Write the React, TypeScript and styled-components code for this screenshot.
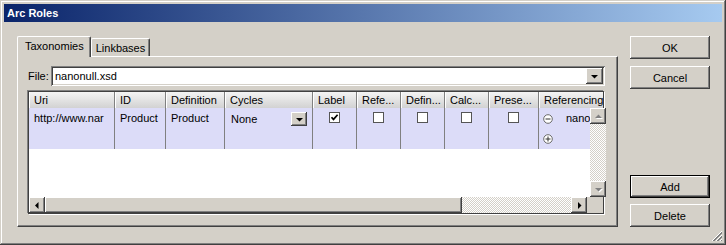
import React from "react";
import styled, { createGlobalStyle, css } from "styled-components";

const Global = createGlobalStyle`
  html, body { margin: 0; padding: 0; background: #d4d0c8; }
  body { font-family: "Liberation Sans", Arial, sans-serif; font-size: 11px; color: #000; }
  * { box-sizing: border-box; }
`;

const raised = css`
  box-shadow: inset -1px -1px #404040, inset 1px 1px #fff, inset -2px -2px #808080, inset 2px 2px #d4d0c8;
`;

const sunken = css`
  box-shadow: inset 1px 1px #808080, inset -1px -1px #fff, inset 2px 2px #404040, inset -2px -2px #d4d0c8;
`;

const dither = css`
  background: repeating-conic-gradient(#ffffff 0 25%, #d4d0c8 0 50%) 0 0 / 2px 2px;
`;

const Window = styled.div`
  position: relative;
  width: 726px;
  height: 245px;
  padding: 4px;
  display: flex;
  flex-direction: column;
  background: #d4d0c8;
  box-shadow: inset -1px -1px #404040, inset 1px 1px #d4d0c8, inset -2px -2px #808080, inset 2px 2px #fff;
`;

const TitleBar = styled.div`
  height: 18px;
  display: flex;
  align-items: center;
  padding-left: 3px;
  background: linear-gradient(to right, #0a246a, #a6caf0);
  color: #fff;
  font-weight: bold;
  font-size: 11px;
`;

const Body = styled.div`
  flex: 1;
  display: flex;
  gap: 12px;
  padding: 14px 12px 14px 13px;
`;

const LeftCol = styled.div`
  width: 601px;
  display: flex;
  flex-direction: column;
`;

const TabStrip = styled.div`
  height: 20px;
  display: flex;
  align-items: flex-end;
`;

const Tab = styled.div<{ $active?: boolean }>`
  display: flex;
  align-items: center;
  background: #d4d0c8;
  border-top: 1px solid #fff;
  border-left: 1px solid #fff;
  border-right: 1px solid #404040;
  box-shadow: inset -1px 0 #808080;
  border-radius: 2px 2px 0 0;
  white-space: nowrap;
  ${(p) =>
    p.$active
      ? css`
          height: 21px;
          padding: 0 6px 2px 7px;
          margin-bottom: -1px;
          position: relative;
          z-index: 1;
        `
      : css`
          height: 18px;
          padding: 0 4px 0 4px;
        `}
`;

const Panel = styled.div`
  height: 171px;
  display: flex;
  flex-direction: column;
  padding: 9px 12px 11px 9px;
  border-top: 1px solid #fff;
  border-left: 1px solid #fff;
  border-right: 1px solid #404040;
  border-bottom: 1px solid #404040;
  box-shadow: inset -1px -1px #808080;
`;

const FileRow = styled.div`
  height: 20px;
  display: flex;
  align-items: center;
  margin-bottom: 4px;
  padding-left: 1px;
`;

const FileLabel = styled.span`
  width: 23px;
`;

const ComboField = styled.div`
  flex: 1;
  height: 20px;
  display: flex;
  align-items: center;
  justify-content: space-between;
  padding: 2px 2px 2px 4px;
  background: #fff;
  ${sunken}
`;

const DropButton = styled.div<{ $w: number; $h: number }>`
  width: ${(p) => p.$w}px;
  height: ${(p) => p.$h}px;
  display: flex;
  align-items: center;
  justify-content: center;
  background: #d4d0c8;
  flex-shrink: 0;
  ${raised}
`;

const Grid = styled.div`
  margin: 1px;
  height: 123px;
  display: flex;
  flex-direction: column;
  border: 1px solid #404040;
  box-shadow: -1px -1px 0 #808080, 1px 1px 0 #fff;
  background: #fff;
`;

const HeaderRow = styled.div`
  height: 16px;
  display: flex;
`;

const HeaderCell = styled.div<{ $w?: number }>`
  ${(p) => (p.$w ? css`width: ${p.$w}px;` : css`flex: 1;`)}
  flex-shrink: 0;
  height: 16px;
  line-height: 16px;
  padding-left: 5px;
  overflow: hidden;
  white-space: nowrap;
  background: linear-gradient(#f4f4f4, #d2d2d2);
  border-right: 1px solid #808080;
  box-shadow: inset 1px 0 #fff;
  &:last-child { border-right: none; }
`;

const BodyArea = styled.div`
  flex: 1;
  display: flex;
`;

const Rows = styled.div`
  flex: 1;
  background: #fff;
`;

const DataRow = styled.div`
  height: 41px;
  display: flex;
  background: #dcdcf8;
`;

const Cell = styled.div<{ $w?: number }>`
  ${(p) => (p.$w ? css`width: ${p.$w}px;` : css`flex: 1;`)}
  flex-shrink: 0;
  height: 41px;
  padding: 4px 5px 0 5px;
  line-height: 13px;
  overflow: hidden;
  white-space: nowrap;
  border-right: 1px solid #808080;
  &:last-child { border-right: none; }
`;

const ComboCell = styled(Cell)`
  display: flex;
  justify-content: space-between;
  align-items: flex-start;
  padding: 4px 5px 0 6px;
`;

const ComboText = styled.span`
  padding-top: 1px;
`;

const CheckCell = styled(Cell)`
  display: flex;
  justify-content: center;
  padding: 4px 0 0 0;
`;

const CheckBox = styled.div`
  width: 11px;
  height: 11px;
  border: 1px solid #555;
  background: #fff;
  display: flex;
  align-items: center;
  justify-content: center;
`;

const RefCell = styled(Cell)`
  padding: 4px 0 0 4px;
  display: flex;
  flex-direction: column;
  gap: 7px;
`;

const RefLine = styled.div`
  height: 13px;
  display: flex;
  align-items: center;
  gap: 13px;
`;

const VScroll = styled.div`
  width: 16px;
  display: flex;
  flex-direction: column;
`;

const ScrollBtn = styled.div`
  width: 16px;
  height: 16px;
  flex-shrink: 0;
  display: flex;
  align-items: center;
  justify-content: center;
  background: #d4d0c8;
  ${raised}
`;

const Track = styled.div`
  flex: 1;
  ${dither}
`;

const HScroll = styled.div`
  height: 16px;
  display: flex;
`;

const Thumb = styled.div<{ $w: number }>`
  width: ${(p) => p.$w}px;
  flex-shrink: 0;
  background: #d4d0c8;
  ${raised}
`;

const Corner = styled.div`
  width: 16px;
  background: #d4d0c8;
`;

const ButtonCol = styled.div`
  width: 80px;
  display: flex;
  flex-direction: column;
`;

const ButtonGroup = styled.div<{ $bottom?: boolean }>`
  display: flex;
  flex-direction: column;
  gap: ${(p) => (p.$bottom ? 6 : 7)}px;
  ${(p) => p.$bottom && css`margin-top: auto;`}
`;

const Button = styled.div<{ $default?: boolean }>`
  width: 80px;
  height: 23px;
  display: flex;
  align-items: center;
  justify-content: center;
  background: #d4d0c8;
  ${raised}
  ${(p) => p.$default && css`border: 1px solid #000;`}
`;

const Grip = styled.svg`
  position: absolute;
  right: 3px;
  bottom: 3px;
`;

type Dir = "up" | "down" | "left" | "right";

const arrowPts: Record<Dir, string> = {
  up: "1,6 8,6 4.5,2.5",
  down: "1,3 8,3 4.5,6.5",
  left: "5.5,1 5.5,8 2,4.5",
  right: "3,1 3,8 6.5,4.5",
};

const Arrow = ({ dir, disabled }: { dir: Dir; disabled?: boolean }) => (
  <svg width="9" height="9" viewBox="0 0 9 9">
    {disabled && <polygon points={arrowPts[dir]} fill="#fff" transform="translate(1 1)" />}
    <polygon points={arrowPts[dir]} fill={disabled ? "#808080" : "#000"} />
  </svg>
);

const CircleSign = ({ plus }: { plus?: boolean }) => (
  <svg width="10" height="10" viewBox="0 0 10 10">
    <circle cx="5" cy="5" r="4.3" fill="#fff" stroke="#6a6a6a" strokeWidth="1" />
    <line x1="2.5" y1="5" x2="7.5" y2="5" stroke="#333" strokeWidth="1" />
    {plus && <line x1="5" y1="2.5" x2="5" y2="7.5" stroke="#333" strokeWidth="1" />}
  </svg>
);

const headers: { label: string; w?: number }[] = [
  { label: "Uri", w: 86 },
  { label: "ID", w: 51 },
  { label: "Definition", w: 59 },
  { label: "Cycles", w: 88 },
  { label: "Label", w: 44 },
  { label: "Refe...", w: 44 },
  { label: "Defin...", w: 44 },
  { label: "Calc...", w: 44 },
  { label: "Prese...", w: 50 },
  { label: "Referencing" },
];

export default function App() {
  return (
    <Window>
      <Global />
      <TitleBar>Arc Roles</TitleBar>
      <Body>
        <LeftCol>
          <TabStrip>
            <Tab $active>Taxonomies</Tab>
            <Tab>Linkbases</Tab>
          </TabStrip>
          <Panel>
            <FileRow>
              <FileLabel>File:</FileLabel>
              <ComboField>
                <span>nanonull.xsd</span>
                <DropButton $w={17} $h={16}>
                  <Arrow dir="down" />
                </DropButton>
              </ComboField>
            </FileRow>
            <Grid>
              <HeaderRow>
                {headers.map((h) => (
                  <HeaderCell key={h.label} $w={h.w}>
                    {h.label}
                  </HeaderCell>
                ))}
              </HeaderRow>
              <BodyArea>
                <Rows>
                  <DataRow>
                    <Cell $w={86}>http://www.nar</Cell>
                    <Cell $w={51}>Product</Cell>
                    <Cell $w={59}>Product</Cell>
                    <ComboCell $w={88}>
                      <ComboText>None</ComboText>
                      <DropButton $w={16} $h={14}>
                        <Arrow dir="down" />
                      </DropButton>
                    </ComboCell>
                    <CheckCell $w={44}>
                      <CheckBox>
                        <svg width="9" height="9" viewBox="0 0 9 9">
                          <polyline points="1.5,4.2 3.5,6.4 7.6,1.8" fill="none" stroke="#000" strokeWidth="1.7" />
                        </svg>
                      </CheckBox>
                    </CheckCell>
                    <CheckCell $w={44}>
                      <CheckBox />
                    </CheckCell>
                    <CheckCell $w={44}>
                      <CheckBox />
                    </CheckCell>
                    <CheckCell $w={44}>
                      <CheckBox />
                    </CheckCell>
                    <CheckCell $w={50}>
                      <CheckBox />
                    </CheckCell>
                    <RefCell>
                      <RefLine>
                        <CircleSign />
                        <span>nano</span>
                      </RefLine>
                      <RefLine>
                        <CircleSign plus />
                      </RefLine>
                    </RefCell>
                  </DataRow>
                </Rows>
                <VScroll>
                  <ScrollBtn>
                    <Arrow dir="up" disabled />
                  </ScrollBtn>
                  <Track />
                  <ScrollBtn>
                    <Arrow dir="down" disabled />
                  </ScrollBtn>
                </VScroll>
              </BodyArea>
              <HScroll>
                <ScrollBtn>
                  <Arrow dir="left" />
                </ScrollBtn>
                <Thumb $w={417} />
                <Track />
                <ScrollBtn>
                  <Arrow dir="right" />
                </ScrollBtn>
                <Corner />
              </HScroll>
            </Grid>
          </Panel>
        </LeftCol>
        <ButtonCol>
          <ButtonGroup>
            <Button>OK</Button>
            <Button>Cancel</Button>
          </ButtonGroup>
          <ButtonGroup $bottom>
            <Button $default>Add</Button>
            <Button>Delete</Button>
          </ButtonGroup>
        </ButtonCol>
      </Body>
      <Grip width="12" height="12" viewBox="0 0 12 12">
        <g strokeWidth="1">
          <line x1="11" y1="1" x2="1" y2="11" stroke="#fff" />
          <line x1="11" y1="2" x2="2" y2="11" stroke="#808080" />
          <line x1="11" y1="3" x2="3" y2="11" stroke="#808080" />
          <line x1="11" y1="5" x2="5" y2="11" stroke="#fff" />
          <line x1="11" y1="6" x2="6" y2="11" stroke="#808080" />
          <line x1="11" y1="7" x2="7" y2="11" stroke="#808080" />
          <line x1="11" y1="9" x2="9" y2="11" stroke="#fff" />
          <line x1="11" y1="10" x2="10" y2="11" stroke="#808080" />
        </g>
      </Grip>
    </Window>
  );
}
